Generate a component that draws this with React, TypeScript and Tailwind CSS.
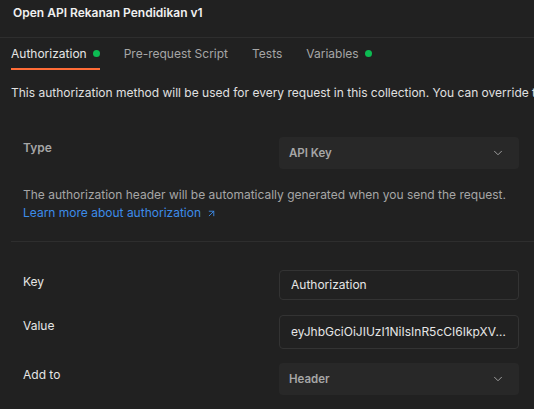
import { ChevronDown, ArrowUpRight } from 'lucide-react';

const tabs = [
  { label: 'Authorization', active: true, dot: true },
  { label: 'Pre-request Script', active: false, dot: false },
  { label: 'Tests', active: false, dot: false },
  { label: 'Variables', active: false, dot: true },
];

function SelectBox({ value }: { value: string }) {
  return (
    <div className="flex h-[32px] w-[240px] items-center justify-between rounded-[4px] bg-[#282828] pl-[10px] pr-[14px]">
      <span className="text-[11.5px] font-semibold text-[#a6a6a6]">{value}</span>
      <ChevronDown size={14} strokeWidth={1.6} className="text-[#a6a6a6]" />
    </div>
  );
}

function TextInput({ value, h }: { value: string; h: string }) {
  return (
    <div className={`flex ${h} w-[240px] items-center overflow-hidden rounded-[4px] border border-[#333333] bg-[#212121] pl-[11px] pr-[8px]`}>
      <span className="truncate text-[#e6e6e6]">{value}</span>
    </div>
  );
}

export default function App() {
  return (
    <div className="h-[409px] w-[534px] overflow-hidden bg-[#212121] font-['Inter','Noto_Sans',sans-serif] text-[12px] leading-[18px]">
      <div className="flex h-[38px] items-start border-b border-[#2e2e2e] px-[13px] pt-[4px]">
        <h1 className="text-[12px] font-semibold text-[#f0f0f0]">Open API Rekanan Pendidikan v1</h1>
      </div>

      <div className="flex h-[32px] items-stretch gap-[24px] px-[11px]">
        {tabs.map((t) => (
          <div
            key={t.label}
            className={`flex items-center gap-[6px] border-b-2 pt-[1px] ${t.active ? 'border-[#ff6c37] text-[#e6e6e6]' : 'border-transparent text-[#a6a6a6]'}`}
          >
            <span>{t.label}</span>
            {t.dot && <span className="h-[7px] w-[7px] rounded-full bg-[#0cbb52]" />}
          </div>
        ))}
      </div>

      <p className="mt-[14px] whitespace-nowrap px-[11px] text-[#e0e0e0]">
        This authorization method will be used for every request in this collection. You can override this by specifying one in the request.
      </p>

      <div className="mt-[35px] flex items-start justify-between pl-[23px] pr-[15px]">
        <span className="mt-[2px] font-semibold text-[#a6a6a6]">Type</span>
        <SelectBox value="API Key" />
      </div>

      <div className="mt-[17px] pl-[23px] text-[#a6a6a6]">
        <p className="whitespace-nowrap">The authorization header will be automatically generated when you send the request.</p>
        <a className="flex items-center gap-[5px] text-[#3d8ce9]">
          Learn more about authorization
          <ArrowUpRight size={11} strokeWidth={2} />
        </a>
      </div>

      <div className="ml-[11px] mt-[19px] border-t border-[#2e2e2e]" />

      <div className="mt-[28px] flex flex-col gap-[15px] pl-[23px] pr-[15px]">
        <div className="flex items-center justify-between">
          <span className="-mt-[6px] text-[#e6e6e6]">Key</span>
          <TextInput value="Authorization" h="h-[30px]" />
        </div>
        <div className="flex items-center justify-between">
          <span className="-mt-[12px] text-[#e6e6e6]">Value</span>
          <TextInput value="eyJhbGciOiJIUzI1NiIsInR5cCI6IkpXVCJ9.eyJzdWIiOiIxMjM0NTY3ODkwIn0" h="h-[34px]" />
        </div>
        <div className="-mt-[1px] flex items-center justify-between">
          <span className="-mt-[8px] text-[#e6e6e6]">Add to</span>
          <SelectBox value="Header" />
        </div>
      </div>
    </div>
  );
}
